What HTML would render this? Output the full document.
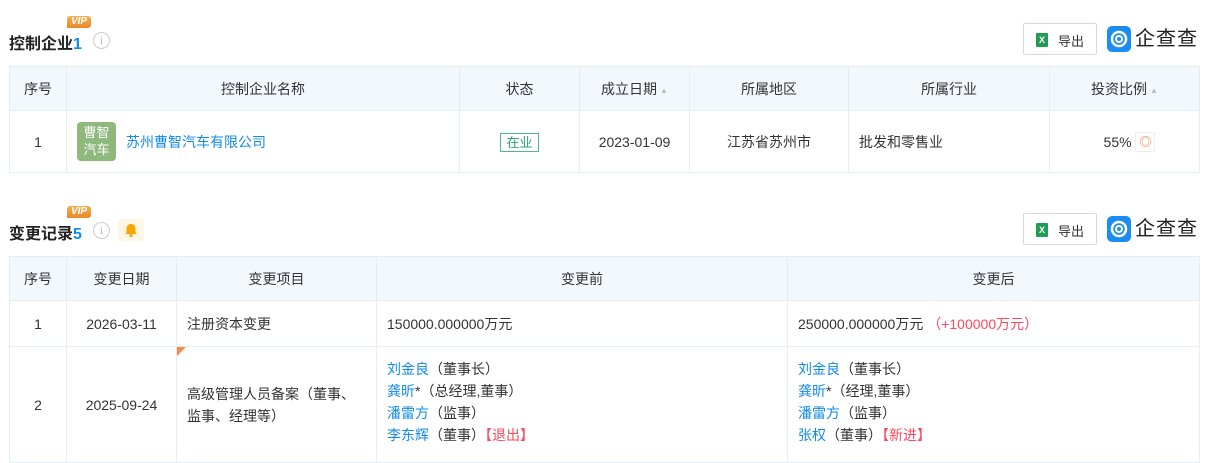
<!DOCTYPE html>
<html><head><meta charset="utf-8"><style>
*{margin:0;padding:0;box-sizing:border-box}
body{width:1214px;height:457px;overflow:hidden;background:#fff;font-family:"Liberation Sans","Noto Sans CJK SC",sans-serif;font-size:14px;color:#333;position:relative}
.abs{position:absolute}
.title{font-size:16px;font-weight:bold;color:#222}
.title b{color:#128bed}
.vip{position:absolute;width:24px;height:12px;background:linear-gradient(#f5b04f,#e8892a);color:#fff;font-size:10px;font-style:italic;font-weight:bold;line-height:12px;text-align:center;border-radius:3px 3px 3px 0}
.info{position:absolute;width:17px;height:17px;border:1px solid #ccc;border-radius:50%;color:#bbb;font-size:12px;line-height:15px;text-align:center;font-family:"Liberation Serif",serif}
.btn{position:absolute;width:74px;height:32px;border:1px solid #d8d8d8;border-radius:2px;font-size:13px;color:#333}
.btn .x{position:absolute;left:12px;top:9px;width:12px;height:14px;background:#1f9d55;color:#fff;font-size:9px;font-weight:bold;text-align:center;line-height:14px;border-radius:1px}
.btn span{position:absolute;left:34px;top:7px}
.logo{position:absolute;width:94px;height:26px}
.logo .ic{position:absolute;left:0;top:0;width:24px;height:26px;background:#1b8cf2;border-radius:5px}
.logo .t{position:absolute;left:28px;top:0px;font-size:20px;line-height:26px;color:#222;letter-spacing:1px}
table{position:absolute;left:9px;border-collapse:collapse;table-layout:fixed}
td,th{border:1px solid #e4eef6;font-weight:normal}
th{background:#f2f8fc;height:44px;color:#333}
.c{text-align:center}
a{color:#128bed;text-decoration:none}
.red{color:#fd485e}
.sort{display:inline-block;color:#bbb;font-size:8px;vertical-align:1px;margin-left:3px}
</style></head><body>

<div class="vip" style="left:67px;top:16px">VIP</div>
<div class="abs title" style="left:9px;top:30px">控制企业<b>1</b></div>
<div class="info" style="left:93px;top:32px">i</div>
<div class="btn" style="left:1023px;top:23px"><div class="x">X</div><span>导出</span></div>
<div class="logo" style="left:1107px;top:26px"><div class="ic"><svg width="24" height="26" viewBox="0 0 24 26"><circle cx="12" cy="13" r="7" fill="none" stroke="#fff" stroke-width="2.5"/><circle cx="12" cy="13" r="3" fill="none" stroke="#fff" stroke-width="2"/></svg></div><div class="t">企查查</div></div>

<table style="top:66px;width:1190px">
<colgroup><col style="width:57px"><col style="width:393px"><col style="width:120px"><col style="width:110px"><col style="width:159px"><col style="width:201px"><col style="width:150px"></colgroup>
<tr><th>序号</th><th>控制企业名称</th><th>状态</th><th>成立日期<span class="sort">▲</span></th><th>所属地区</th><th>所属行业</th><th>投资比例<span class="sort">▲</span></th></tr>
<tr style="height:62px"><td class="c">1</td><td><div style="display:flex;align-items:center;padding-left:10px"><div style="width:39px;height:39px;background:#8fb87d;border-radius:4px;color:#fff;font-size:13px;line-height:17px;text-align:center;padding-top:2px">曹智<br>汽车</div><a style="margin-left:10px">苏州曹智汽车有限公司</a></div></td>
<td class="c"><span style="border:1px solid #4cb88e;color:#2aa36d;padding:1px 5px;font-size:13px">在业</span></td>
<td class="c">2023-01-09</td><td class="c">江苏省苏州市</td><td style="padding-left:10px">批发和零售业</td>
<td class="c" style="padding-left:10px;vertical-align:middle"><span style="vertical-align:middle">55%</span> <span style="display:inline-block;width:20px;height:20px;border:1px solid #eee;color:#f07a4a;font-size:12px;line-height:18px;vertical-align:middle">◎</span></td></tr>
</table>

<div class="vip" style="left:67px;top:206px">VIP</div>
<div class="abs title" style="left:9px;top:220px">变更记录<b>5</b></div>
<div class="info" style="left:93px;top:222px">i</div>
<div class="abs" style="left:118px;top:219px;width:26px;height:22px;background:#fff6e6;border-radius:2px"><svg width="26" height="22" viewBox="0 0 26 22"><path d="M13 5c-3 0-4.5 2.2-4.5 5v3.5L7 15h12l-1.5-1.5V10c0-2.8-1.5-5-4.5-5z" fill="#f7a600"/><circle cx="13" cy="16.5" r="1.6" fill="#f7a600"/></svg></div>
<div class="btn" style="left:1023px;top:213px"><div class="x">X</div><span>导出</span></div>
<div class="logo" style="left:1107px;top:216px"><div class="ic"><svg width="24" height="26" viewBox="0 0 24 26"><circle cx="12" cy="13" r="7" fill="none" stroke="#fff" stroke-width="2.5"/><circle cx="12" cy="13" r="3" fill="none" stroke="#fff" stroke-width="2"/></svg></div><div class="t">企查查</div></div>

<table style="top:256px;width:1190px">
<colgroup><col style="width:57px"><col style="width:110px"><col style="width:200px"><col style="width:411px"><col style="width:412px"></colgroup>
<tr><th>序号</th><th>变更日期</th><th>变更项目</th><th>变更前</th><th>变更后</th></tr>
<tr style="height:46px"><td class="c">1</td><td class="c">2026-03-11</td><td style="padding-left:10px">注册资本变更</td><td style="padding-left:10px">150000.000000万元</td><td style="padding-left:10px">250000.000000万元 <span class="red">（+100000万元）</span></td></tr>
<tr style="height:116px"><td class="c">2</td><td class="c">2025-09-24</td><td style="padding-left:10px;padding-right:20px;position:relative;line-height:22px"><div style="position:absolute;left:0;top:0;border-top:9px solid #f7894a;border-right:9px solid transparent"></div>高级管理人员备案（董事、监事、经理等）</td>
<td style="padding-left:10px;line-height:22px;vertical-align:top;padding-top:11px"><a>刘金良</a>（董事长）<br><a>龚昕</a>*（总经理,董事）<br><a>潘雷方</a>（监事）<br><a>李东辉</a>（董事）<span class="red">【退出】</span></td>
<td style="padding-left:10px;line-height:22px;vertical-align:top;padding-top:11px"><a>刘金良</a>（董事长）<br><a>龚昕</a>*（经理,董事）<br><a>潘雷方</a>（监事）<br><a>张权</a>（董事）<span class="red">【新进】</span></td></tr>
</table>
</body></html>
